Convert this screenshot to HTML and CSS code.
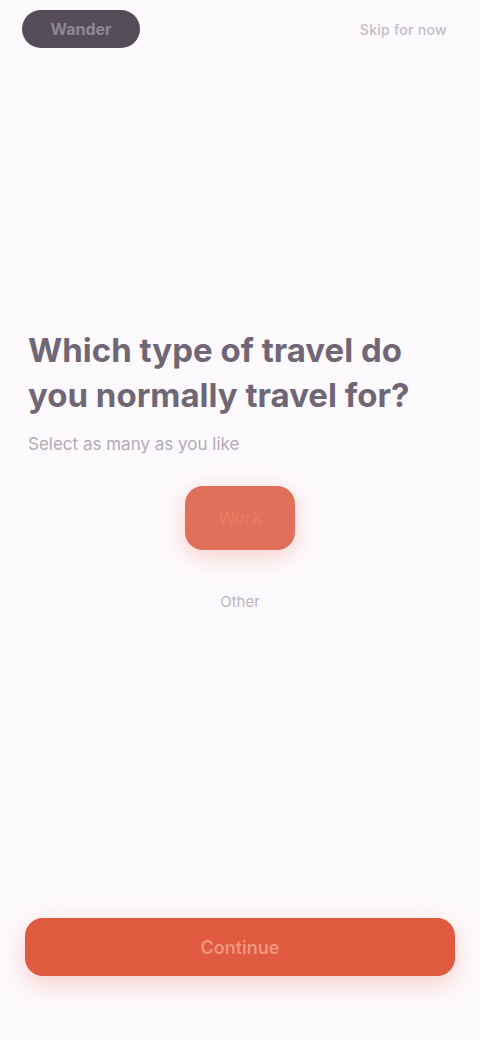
FILE: index.html
```html
<!DOCTYPE html>
<html>
<head>
<meta charset="utf-8">
<link rel="stylesheet" href="styles.css">
</head>
<body>
<div class="screen">
  <header class="topbar">
    <div class="brand">Wander</div>
    <div class="login">Skip for now</div>
  </header>
  <main class="content">
    <h1 class="title">Which type of travel do you normally travel for?</h1>
    <p class="subtitle">Select as many as you like</p>
    <div class="options">
      <button class="chip">Work</button>
      <div class="other">Other</div>
    </div>
  </main>
  <footer class="footer">
    <button class="cta">Continue</button>
  </footer>
</div>
</body>
</html>
```
FILE: styles.css
```css
* { box-sizing: border-box; }
html, body { margin: 0; padding: 0; }
body {
  background: #fdfafd;
  font-family: Inter, "Liberation Sans", sans-serif;
  color: #2b2530;
}
.screen {
  width: 480px;
  height: 1040px;
  display: flex;
  flex-direction: column;
  padding: 10px 25px 64px 25px;
}
.topbar {
  display: flex;
  justify-content: space-between;
  align-items: center;
  height: 38px;
}
.brand {
  background: #544d59;
  color: #8e8793;
  border-radius: 19px;
  height: 38px;
  width: 118px;
  margin-left: -3px;
  display: flex;
  align-items: center;
  justify-content: center;
  font-weight: 700;
  font-size: 16px;
}
.login {
  font-size: 14px;
  color: #c4bcc8;
  font-weight: 500;
  margin-right: 8px;
  letter-spacing: 0.3px;
}
.content {
  flex: 1;
  padding-top: 280px;
}
.title {
  margin: 0;
  max-width: 410px;
  font-size: 33px;
  line-height: 45px;
  font-weight: 700;
  color: #6f6775;
  padding-left: 3px;
  letter-spacing: 0px;
}
.subtitle {
  margin: 16px 0 0 3px;
  font-size: 17px;
  color: #b2aab5;
}
.options {
  display: flex;
  flex-direction: column;
  align-items: center;
  margin-top: 32px;
}
.chip {
  width: 110px;
  height: 64px;
  border: none;
  border-radius: 18px;
  background: #e0705a;
  color: #e77a62;
  font-family: inherit;
  font-size: 17px;
  font-weight: 600;
  box-shadow: 0 6px 22px rgba(240, 120, 100, 0.35);
}
.other {
  margin-top: 42px;
  font-size: 15px;
  color: #bcb4bf;
}
.cta {
  width: 100%;
  height: 58px;
  border: none;
  border-radius: 18px;
  background: #df5a3e;
  color: #f09580;
  font-family: inherit;
  font-size: 18px;
  font-weight: 600;
  box-shadow: 0 8px 24px rgba(235, 100, 80, 0.3);
}
```
